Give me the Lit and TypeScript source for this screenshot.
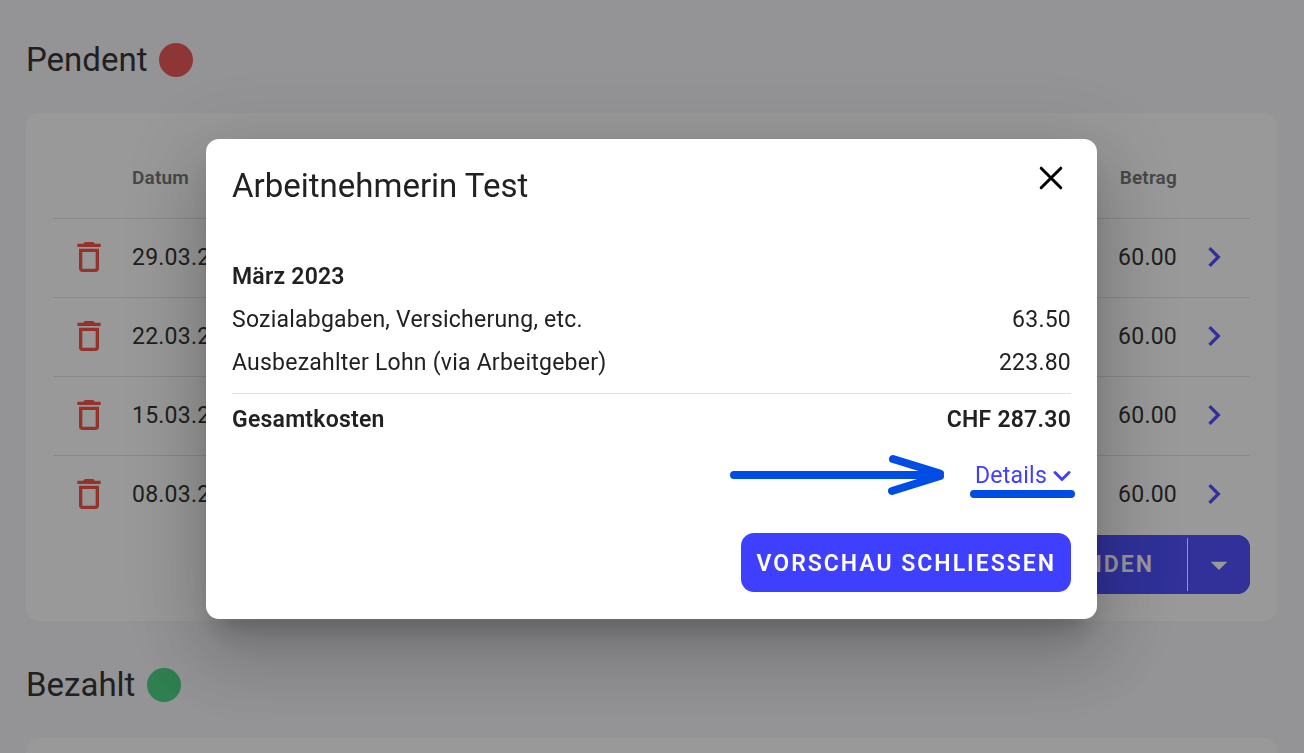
import { LitElement, html, css, svg } from "lit";
import { customElement, property } from "lit/decorators.js";

interface Entry {
  date: string;
  amount: string;
}

const ENTRIES: Entry[] = [
  { date: "29.03.2023", amount: "60.00" },
  { date: "22.03.2023", amount: "60.00" },
  { date: "15.03.2023", amount: "60.00" },
  { date: "08.03.2023", amount: "60.00" },
];

const COSTS = [
  { label: "Sozialabgaben, Versicherung, etc.", value: "63.50" },
  { label: "Ausbezahlter Lohn (via Arbeitgeber)", value: "223.80" },
];

const trashPath = svg`<path d="M6 19c0 1.1.9 2 2 2h8c1.1 0 2-.9 2-2V7H6v12zM8 9h8v10H8V9zm7.500-5-1-1h-5l-1 1H5v2h14V4z"/>`;
const chevronRightPath = svg`<path d="M10 6 8.590 7.410 13.170 12l-4.580 4.590L10 18l6-6z"/>`;

@customElement("payments-page")
class PaymentsPage extends LitElement {
  static styles = css`
    :host {
      display: block;
      padding: 40px 27px 40px 26px;
    }
    .heading {
      display: flex;
      align-items: center;
      gap: 12px;
      margin: 0 0 33px;
      font-size: 33px;
      line-height: 40px;
      font-weight: 400;
    }
    .dot {
      width: 34px;
      height: 34px;
      border-radius: 50%;
    }
    .pending { background: #eb4848; }
    .paid { background: #3bcf78; }
    .card {
      background: #fff;
      border-radius: 13px;
      padding: 26px 27px 27px;
      margin-bottom: 44px;
    }
    .entries {
      width: 100%;
      border-collapse: separate;
      border-spacing: 0;
      table-layout: fixed;
    }
    th, td {
      box-sizing: border-box;
      height: 79px;
      padding: 0 0 2px;
      border-bottom: 1px solid #e0e0e0;
      font-size: 23px;
      letter-spacing: 0.01em;
      text-align: left;
      vertical-align: middle;
    }
    th {
      height: 80px;
      padding-bottom: 3px;
      font-size: 19px;
      font-weight: 600;
      color: #696969;
    }
    tbody tr:last-child td { border-bottom-color: transparent; }
    .col-icon { width: 79px; }
    .col-amount { width: 160px; }
    .col-open { width: 73px; }
    .amount { text-align: right; }
    .icon-button {
      display: flex;
      padding: 0;
      border: 0;
      background: none;
      fill: currentColor;
    }
    .icon-button svg { width: 40px; height: 40px; }
    .remove { color: #f44336; margin-left: 16px; }
    .open { color: #3f40ff; margin: 0 auto; }
    .actions {
      display: flex;
      justify-content: flex-end;
    }
    .send, .more {
      height: 59px;
      border: 0;
      color: #fff;
      background: #3f40ff;
      font: 600 23px/28px Roboto, sans-serif;
      letter-spacing: 2px;
    }
    .send {
      padding: 0 33px;
      border-radius: 13px 0 0 13px;
    }
    .split {
      display: flex;
      align-items: center;
      background: #3f40ff;
      border-radius: 13px;
    }
    .rule { width: 1px; height: 53px; background: #fff; }
    .more {
      width: 62px;
      padding: 0;
      border-radius: 0 13px 13px 0;
      fill: currentColor;
    }
    .more svg { width: 40px; height: 40px; display: block; margin: 0 auto; }
    .tall { min-height: 240px; }
  `;

  render() {
    return html`
      <h2 class="heading">Pendent <span class="dot pending"></span></h2>
      <section class="card">
        <table class="entries">
          <colgroup>
            <col class="col-icon" />
            <col />
            <col class="col-amount" />
            <col class="col-open" />
          </colgroup>
          <thead>
            <tr>
              <th></th>
              <th scope="col">Datum</th>
              <th scope="col" class="amount">Betrag</th>
              <th></th>
            </tr>
          </thead>
          <tbody>
            ${ENTRIES.map(
              (e) => html`<tr>
                <td>
                  <button class="icon-button remove" aria-label="Löschen">
                    <svg viewBox="0 0 24 24">${trashPath}</svg>
                  </button>
                </td>
                <td>${e.date}</td>
                <td class="amount">${e.amount}</td>
                <td>
                  <button class="icon-button open" aria-label="Öffnen">
                    <svg viewBox="0 0 24 24">${chevronRightPath}</svg>
                  </button>
                </td>
              </tr>`
            )}
          </tbody>
        </table>
        <div class="actions">
          <div class="split">
            <button class="send">SENDEN</button>
            <span class="rule"></span>
            <button class="more" aria-label="Weitere Aktionen">
              <svg viewBox="0 0 24 24"><path d="m7 10 5 5 5-5z" /></svg>
            </button>
          </div>
        </div>
      </section>
      <h2 class="heading">Bezahlt <span class="dot paid"></span></h2>
      <section class="card tall"></section>
    `;
  }
}

@customElement("cost-dialog")
class CostDialog extends LitElement {
  @property() heading = "";

  static styles = css`
    :host {
      position: fixed;
      inset: 0;
      display: flex;
      align-items: center;
      justify-content: center;
      padding: 5px 1px 0 0;
      box-sizing: border-box;
      background: rgba(33, 33, 33, 0.46);
    }
    .dialog {
      box-sizing: border-box;
      width: 891px;
      max-width: 92vw;
      padding: 26px 26px 27px;
      border-radius: 13px;
      background: #fff;
      box-shadow: 0 18px 25px -12px rgba(0, 0, 0, 0.2),
        0 40px 63px 5px rgba(0, 0, 0, 0.14),
        0 15px 77px 13px rgba(0, 0, 0, 0.12);
    }
    .top {
      display: flex;
      justify-content: space-between;
      align-items: flex-start;
      margin-bottom: 49px;
    }
    .title {
      margin: 0;
      font-size: 33px;
      line-height: 41px;
      font-weight: 400;
    }
    .close {
      display: flex;
      align-items: center;
      justify-content: center;
      width: 40px;
      height: 26px;
      padding: 0;
      border: 0;
      background: none;
      color: #000;
    }
    .close svg { width: 24px; height: 24px; }
    .costs, .month {
      margin: 0;
      font-size: 23px;
      line-height: 43px;
      letter-spacing: 0.01em;
    }
    .month { font-weight: 600; }
    .line {
      display: flex;
      justify-content: space-between;
    }
    .line dd { margin: 0; }
    .total {
      margin-top: 9px;
      padding-top: 4px;
      border-top: 1px solid #e0e0e0;
      font-weight: 600;
    }
    .more {
      position: relative;
      display: flex;
      justify-content: flex-end;
      margin: 18px 0 40px;
    }
    .details {
      display: flex;
      align-items: center;
      gap: 6px;
      padding: 0;
      border: 0;
      background: none;
      color: #3f40ff;
      font: 400 23px/34px Roboto, sans-serif;
      letter-spacing: 0.01em;
    }
    .details svg { width: 18px; height: 14px; }
    .pointer {
      position: absolute;
      right: -4px;
      top: -5px;
      width: 345px;
      height: 45px;
      pointer-events: none;
    }
    .footer { display: flex; justify-content: flex-end; }
    .primary {
      height: 59px;
      padding: 2px 15px 0;
      border: 0;
      border-radius: 13px;
      background: #3f40ff;
      color: #fff;
      font: 600 23px/28px Roboto, sans-serif;
      letter-spacing: 2px;
    }
  `;

  render() {
    return html`
      <div class="dialog" role="dialog" aria-modal="true" aria-labelledby="title">
        <header class="top">
          <h1 class="title" id="title">${this.heading}</h1>
          <button class="close" aria-label="Schliessen">
            <svg viewBox="0 0 24 24" fill="none" stroke="currentColor" stroke-width="3" stroke-linecap="round">
              <path d="m2.200 2.200 19.600 19.600M21.800 2.200 2.200 21.800" />
            </svg>
          </button>
        </header>
        <h3 class="month">März 2023</h3>
        <dl class="costs">
          ${COSTS.map(
            (c) => html`<div class="line"><dt>${c.label}</dt><dd>${c.value}</dd></div>`
          )}
          <div class="line total"><dt>Gesamtkosten</dt><dd>CHF 287.30</dd></div>
        </dl>
        <div class="more">
          <button class="details">
            Details
            <svg viewBox="0 0 18 14" fill="none" stroke="currentColor" stroke-width="3" stroke-linecap="round">
              <path d="m2 3.500 7 7 7-7" />
            </svg>
          </button>
          <svg class="pointer" viewBox="730 454 345 45" fill="none" stroke="#004de6" stroke-width="8" stroke-linecap="round" stroke-linejoin="round">
            <path d="M734 475H938M893 459l47 14.500M892 491l48-15M974 494h97" />
          </svg>
        </div>
        <footer class="footer">
          <button class="primary">VORSCHAU SCHLIESSEN</button>
        </footer>
      </div>
    `;
  }
}

@customElement("app-root")
class AppRoot extends LitElement {
  static styles = css`
    :host {
      display: block;
      height: 100vh;
      overflow: hidden;
      background: #f6f6fa;
      color: #212121;
      font-family: Roboto, sans-serif;
    }
  `;

  render() {
    return html`
      <payments-page></payments-page>
      <cost-dialog heading="Arbeitnehmerin Test"></cost-dialog>
    `;
  }
}
